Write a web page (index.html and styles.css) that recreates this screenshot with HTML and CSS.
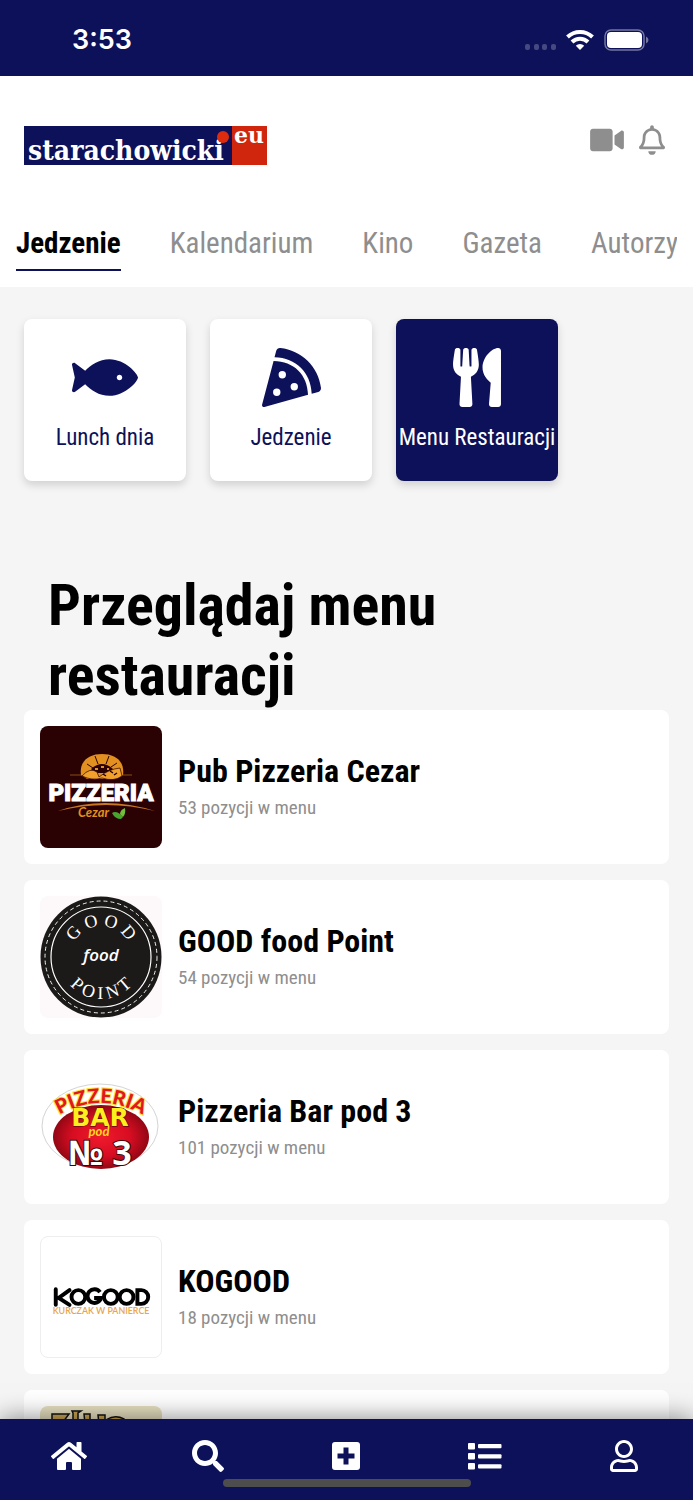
FILE: index.html
```html
<!DOCTYPE html>
<html lang="pl">
<head>
    <meta charset="UTF-8">
    <meta name="viewport" content="width=device-width, initial-scale=1.0">
    <title>starachowicki.eu - Menu Restauracji</title>
    <link rel="stylesheet" href="styles.css">
</head>
<body>
    <div class="status-bar">
        <span class="time">3:53</span>
        <div class="status-icons">
            <svg width="32" height="22" viewBox="0 0 32 22" fill="#464981">
                <rect x="1" y="15" width="5" height="6" rx="2"/>
                <rect x="10" y="15" width="5" height="6" rx="2"/>
                <rect x="18" y="15" width="5" height="6" rx="2"/>
                <rect x="27" y="15" width="5" height="6" rx="2"/>
            </svg>
            <svg width="28" height="22" viewBox="0 0 28 22" fill="none" stroke="#fff" stroke-width="4">
                <path d="M1.5 8A18 18 0 0 1 26.500 8"/>
                <path d="M6 13A11.500 11.500 0 0 1 22 13"/>
                <path d="M14 21l-4.200-4.200a6 6 0 0 1 8.400 0z" fill="#fff" stroke="none"/>
            </svg>
            <svg width="45" height="22" viewBox="0 0 45 22">
                <rect x="1" y="1" width="39" height="20" rx="6" fill="none" stroke="#74769f" stroke-width="1.500"/>
                <rect x="3" y="3" width="35" height="16" rx="4" fill="#fff"/>
                <path d="M42 7.500q2.500 1 2.500 3.500t-2.500 3.500z" fill="#74769f"/>
            </svg>
        </div>
    </div>

    <header class="header">
        <div class="brand">
            <a href="#" aria-label="starachowicki.eu">
                <svg class="logo" width="243" height="39" viewBox="0 0 243 39">
                    <rect width="208" height="39" fill="#0d1159"/>
                    <rect x="208" width="35" height="39" fill="#cf260d"/>
                    <text class="logo-name" x="4" y="34">starachowicki</text>
                    <text class="logo-eu" x="210" y="17">eu</text>
                    <circle cx="199" cy="11" r="6" fill="#dd2b0e"/>
                </svg>
            </a>
            <div class="actions">
                <button type="button" aria-label="Wideo">
                    <svg width="34" height="30" viewBox="0 0 576 512"><path d="M336.200 64H47.800C21.400 64 0 85.400 0 111.800v288.400C0 426.600 21.400 448 47.800 448h288.400c26.400 0 47.800-21.400 47.800-47.800V111.800c0-26.400-21.400-47.800-47.800-47.800zm189.400 37.700L416 177.300v157.400l109.600 75.500c21.200 14.600 50.400-.3 50.400-25.800V127.500c0-25.400-29.100-40.400-50.400-25.800z"/></svg>
                </button>
                <button type="button" aria-label="Powiadomienia">
                    <svg width="26" height="30" viewBox="0 0 448 512"><path d="M439.390 362.290c-19.320-20.760-55.470-51.990-55.470-154.290 0-77.700-54.480-139.900-127.940-155.160V32c0-17.670-14.320-32-31.980-32s-31.980 14.330-31.980 32v20.840C118.560 68.100 64.080 130.300 64.080 208c0 102.300-36.150 133.530-55.470 154.290-6 6.450-8.660 14.160-8.610 21.710.11 16.400 12.980 32 32.100 32h383.800c19.120 0 32-15.600 32.100-32 .05-7.550-2.610-15.270-8.610-21.710zM67.530 368c21.220-27.970 44.420-74.330 44.530-159.420 0-.2-.06-.38-.06-.58 0-61.860 50.140-112 112-112s112 50.140 112 112c0 .2-.06.38-.06.58.11 85.100 23.310 131.460 44.530 159.420H67.530zM224 512c35.320 0 63.970-28.650 63.970-64H160.030c0 35.350 28.650 64 63.970 64z"/></svg>
                </button>
            </div>
        </div>
        <nav class="tabs">
            <a href="#" class="active">Jedzenie</a>
            <a href="#">Kalendarium</a>
            <a href="#">Kino</a>
            <a href="#">Gazeta</a>
            <a href="#">Autorzy</a>
        </nav>
    </header>

    <main class="content">
        <div class="tiles">
            <a href="#" class="tile">
                <svg width="66" height="59" viewBox="0 0 576 512"><path d="M327.100 96c-89.970 0-168.540 54.770-212.270 101.630L27.500 131.580c-12.130-9.180-30.240.6-27.140 14.660L24.540 256 .35 365.770c-3.100 14.060 15.010 23.830 27.140 14.660l87.330-66.050C158.550 361.230 237.130 416 327.100 416 464.560 416 576 288 576 256S464.560 96 327.100 96zm87.430 184c-13.250 0-24-10.750-24-24 0-13.260 10.750-24 24-24 13.260 0 24 10.740 24 24 0 13.250-10.750 24-24 24z"/></svg>
                <span>Lunch dnia</span>
            </a>
            <a href="#" class="tile">
                <svg width="59" height="59" viewBox="0 0 512 512"><path d="M158.870.15c-16.160-1.520-31.200 8.420-35.330 24.120l-14.810 56.270c187.620 5.490 314.540 130.610 322.480 317l56.940-15.780c15.720-4.360 25.490-19.680 23.620-35.900C490.890 165.080 340.780 17.320 158.870.15zm-58.470 112L.55 491.640a16.210 16.210 0 0 0 20 19.750l379-105.100c-4.270-174.890-123.080-292.140-299.150-294.100zM128 416a32 32 0 1 1 32-32 32 32 0 0 1-32 32zm48-152a32 32 0 1 1 32-32 32 32 0 0 1-32 32zm104 104a32 32 0 1 1 32-32 32 32 0 0 1-32 32z"/></svg>
                <span>Jedzenie</span>
            </a>
            <a href="#" class="tile selected">
                <svg width="48" height="59" viewBox="0 0 416 512"><path d="M207.900 15.200c.8 4.700 16.100 94.500 16.100 128.800 0 52.300-27.800 89.600-68.900 104.600L168 486.700c.7 13.700-10.200 25.300-24 25.300H80c-13.700 0-24.700-11.500-24-25.300l12.900-238.100C27.700 233.600 0 196.200 0 144 0 109.600 15.300 19.900 16.100 15.200 19.300-5.100 61.400-5.400 64 16.300v141.200c1.300 3.400 15.100 3.200 16 0 1.400-25.300 7.900-139.200 8-141.800 3.300-20.800 44.700-20.800 47.900 0 .2 2.700 6.600 116.500 8 141.800.9 3.200 14.800 3.400 16 0V16.300c2.600-21.600 44.800-21.400 47.900-1.100zm119.200 285.700l-15 185.100c-1.200 14 9.900 26 23.900 26h56c13.300 0 24-10.700 24-24V24c0-13.200-10.700-24-24-24-82.500 0-221.400 178.500-64.900 300.900z"/></svg>
                <span>Menu Restauracji</span>
            </a>
        </div>

        <h1>Przeglądaj menu restauracji</h1>

        <div class="restaurants">
            <a href="#" class="restaurant">
                <svg class="thumb" viewBox="0 0 122 122">
                    <rect width="122" height="122" fill="#2a0203"/>
                    <path d="M30 49h62" stroke="#8a4c15"/>
                    <path d="M41 49C39 35 49 28 62 28s23 7 21 21l-8 4H47z" fill="#e29020"/>
                    <path d="M47 38l6 4M55 30l3 8M69 30l-3 8M77 37l-6 4" stroke="#2a0203"/>
                    <path d="M51 43q11-10 22 0l-3 4H55z" fill="#2a0203"/>
                    <path d="M55 43h3M61 41h3M67 43h2" stroke="#e29020" stroke-width="2"/>
                    <path d="M42 50q8-9 15-4l2 5q10-8 21-9l2 8q-8 6-20 2-10 3-20-2z" fill="#f0a02b" stroke="#2a0203" stroke-width=".7"/>
                    <path d="M63 48l3 2M70 45l3 2M74 49l3-2" stroke="#2a0203" stroke-width="1.500"/>
                    <text class="cezar-name" x="61" y="75">PIZZERIA</text>
                    <path d="M18 85q46-16 97 0-49-12-97 0z" fill="#c97822"/>
                    <text class="cezar-sub" x="38" y="91">Cezar</text>
                    <path d="M72 87q5-3 11 4l-2 2q-6 0-9-6z" fill="#45a52c"/>
                    <path d="M80 88q0-4 5-6 1 6-2 9z" fill="#75bd3c"/>
                </svg>
                <div class="info">
                    <h2>Pub Pizzeria Cezar</h2>
                    <p>53 pozycji w menu</p>
                </div>
            </a>
            <a href="#" class="restaurant">
                <svg class="thumb" viewBox="0 0 122 122">
                    <rect width="122" height="122" fill="#fdf9fa"/>
                    <circle cx="61" cy="61" r="60.500" fill="#1b1a19"/>
                    <circle cx="61" cy="61" r="56" fill="none" stroke="#f2f0ef" stroke-width="1" stroke-dasharray="4 3"/>
                    <circle cx="61" cy="61" r="50" fill="none" stroke="#fff" stroke-width="1.200"/>
                    <path id="arcTop" d="M30 61a31 31 0 0 1 62 0" fill="none"/>
                    <path id="arcBottom" d="M19 61a42 42 0 0 0 84 0" fill="none"/>
                    <text class="good-ring"><textPath href="#arcTop" startOffset="50%">G O O D</textPath></text>
                    <text class="good-food" x="61" y="65">food</text>
                    <text class="good-ring"><textPath href="#arcBottom" startOffset="50%">P O I N T</textPath></text>
                </svg>
                <div class="info">
                    <h2>GOOD food Point</h2>
                    <p>54 pozycji w menu</p>
                </div>
            </a>
            <a href="#" class="restaurant">
                <svg class="thumb" viewBox="0 0 122 122">
                    <defs>
                        <radialGradient id="barRed">
                            <stop offset="0" stop-color="#ef1a2c"/>
                            <stop offset=".6" stop-color="#d80d22"/>
                            <stop offset="1" stop-color="#920714"/>
                        </radialGradient>
                    </defs>
                    <ellipse cx="60" cy="60" rx="58" ry="42" fill="#fff" stroke="#d4d4d4"/>
                    <ellipse cx="61" cy="71" rx="48" ry="32" fill="url(#barRed)"/>
                    <path id="arcBar" d="M14 52Q60 22 108 52" fill="none"/>
                    <text class="bar-pizzeria"><textPath href="#arcBar" startOffset="50%">PIZZERIA</textPath></text>
                    <text class="bar-name" x="60" y="60">BAR</text>
                    <text class="bar-number" x="60" y="99">№ 3</text>
                    <text class="bar-pod" x="59" y="70">pod</text>
                </svg>
                <div class="info">
                    <h2>Pizzeria Bar pod 3</h2>
                    <p>101 pozycji w menu</p>
                </div>
            </a>
            <a href="#" class="restaurant">
                <svg class="thumb framed" viewBox="0 0 122 122">
                    <g fill="none" stroke="#000" stroke-width="4">
                        <path d="M15 53v16M29 54L18 62l11 7" stroke-linecap="round"/>
                        <circle cx="38" cy="61" r="7"/>
                        <path d="M60 56a7 7 0 1 0 1 6h-7"/>
                        <circle cx="71" cy="61" r="7"/>
                        <circle cx="87" cy="61" r="7"/>
                        <path d="M98 54h4a7 7 0 0 1 0 14h-4z"/>
                    </g>
                    <text class="kogood-sub" x="61" y="78">KURCZAK W PANIERCE</text>
                </svg>
                <div class="info">
                    <h2>KOGOOD</h2>
                    <p>18 pozycji w menu</p>
                </div>
            </a>
            <a href="#" class="restaurant">
                <svg class="thumb" viewBox="0 0 122 122">
                    <rect width="122" height="122" fill="#e6dfc0"/>
                    <path d="M12 8h17l-6 8H12zM32 5h9l-3 2v10h-5V7zM44 8h6v10h-5zM58 9h7v9h-6zM66 14q9-6 18-1v5H66z" fill="#c9a350" stroke="#111" stroke-width="1.500"/>
                </svg>
            </a>
        </div>
    </main>

    <nav class="bottom-nav">
        <a href="#" aria-label="Start"><svg width="36" height="32" viewBox="0 0 576 512"><path d="M280.370 148.260L96 300.110V464a16 16 0 0 0 16 16l112.060-.29a16 16 0 0 0 15.920-16V368a16 16 0 0 1 16-16h64a16 16 0 0 1 16 16v95.640a16 16 0 0 0 16 16.050L464 480a16 16 0 0 0 16-16V300L295.670 148.260a12.190 12.190 0 0 0-15.300 0zM571.600 251.470L488 182.560V44.050a12 12 0 0 0-12-12h-56a12 12 0 0 0-12 12v72.610L318.470 43a48 48 0 0 0-61 0L4.340 251.470a12 12 0 0 0-1.600 16.900l25.500 31A12 12 0 0 0 45.150 301l235.220-193.740a12.190 12.190 0 0 1 15.300 0L530.900 301a12 12 0 0 0 16.900-1.600l25.500-31a12 12 0 0 0-1.700-16.930z"/></svg></a>
        <a href="#" aria-label="Szukaj"><svg width="32" height="32" viewBox="0 0 512 512"><path d="M505 442.700L405.300 343c-4.500-4.500-10.600-7-17-7H372c27.600-35.300 44-79.700 44-128C416 93.100 322.900 0 208 0S0 93.100 0 208s93.100 208 208 208c48.300 0 92.700-16.400 128-44v16.300c0 6.400 2.500 12.500 7 17l99.700 99.700c9.400 9.400 24.600 9.400 33.900 0l28.300-28.300c9.400-9.400 9.400-24.600.1-34zM208 336c-70.700 0-128-57.200-128-128 0-70.700 57.200-128 128-128 70.700 0 128 57.200 128 128 0 70.700-57.200 128-128 128z"/></svg></a>
        <a href="#" aria-label="Dodaj"><svg width="28" height="32" viewBox="0 0 28 32"><path fill-rule="evenodd" d="M3 2h22a3 3 0 0 1 3 3v22a3 3 0 0 1-3 3H3a3 3 0 0 1-3-3V5a3 3 0 0 1 3-3zM11.500 7.500v6H5.500v5h6v6h5v-6h6v-5h-6v-6z"/></svg></a>
        <a href="#" aria-label="Lista"><svg width="34" height="32" viewBox="0 0 34 32"><rect x="0" y="3" width="7" height="6.500" rx="1"/><rect x="0" y="13" width="7" height="6.500" rx="1"/><rect x="0" y="23" width="7" height="6.500" rx="1"/><rect x="10" y="4" width="23.500" height="4.200" rx="1"/><rect x="10" y="14.200" width="23.500" height="4.200" rx="1"/><rect x="10" y="24.300" width="23.500" height="4.200" rx="1"/></svg></a>
        <a href="#" aria-label="Profil"><svg width="28" height="32" viewBox="0 0 448 512"><path d="M313.600 304c-28.700 0-42.500 16-89.600 16-47.100 0-60.800-16-89.600-16C60.200 304 0 364.200 0 438.400V464c0 26.500 21.500 48 48 48h352c26.500 0 48-21.500 48-48v-25.600c0-74.200-60.200-134.400-134.400-134.400zM400 464H48v-25.600c0-47.600 38.800-86.400 86.400-86.400 14.600 0 38.300 16 89.600 16 51.700 0 74.900-16 89.600-16 47.600 0 86.400 38.800 86.400 86.400V464zM224 288c79.500 0 144-64.500 144-144S303.500 0 224 0 80 64.500 80 144s64.500 144 144 144zm0-240c52.900 0 96 43.100 96 96s-43.100 96-96 96-96-43.100-96-96 43.100-96 96-96z"/></svg></a>
        <div class="home-indicator"></div>
    </nav>
</body>
</html>
```
FILE: styles.css
```css
* {
    box-sizing: border-box;
}

body {
    font-family: "Roboto Condensed", "Liberation Sans Narrow", Roboto, sans-serif;
    background-color: #f5f5f5;
    color: #000;
    height: 100vh;
    margin: 0;
    display: flex;
    flex-direction: column;
    overflow: hidden;
}

a {
    color: inherit;
    text-decoration: none;
}

svg {
    display: block;
    flex-shrink: 0;
}

/* Status bar */
.status-bar {
    background-color: #0d1159;
    color: white;
    height: 76px;
    padding: 0 44px 0 72px;
    display: flex;
    flex-shrink: 0;
    justify-content: space-between;
    align-items: center;
}

.time {
    font-family: Inter, sans-serif;
    font-size: 27px;
    font-weight: 600;
    line-height: 32px;
    padding-top: 4px;
}

.status-icons {
    display: flex;
    gap: 10px;
    padding-top: 3px;
}

/* Header */
.header {
    background-color: white;
    flex-shrink: 0;
    padding-top: 48px;
}

.brand {
    display: flex;
    justify-content: space-between;
    align-items: center;
    padding: 0 28px 0 24px;
    height: 42px;
}

.logo {
    overflow: visible;
}

.logo-name {
    font: bold 28px "DejaVu Serif Condensed", "DejaVu Serif", serif;
    fill: white;
}

.logo-eu {
    font: bold 22px "DejaVu Serif", serif;
    fill: white;
}

.actions {
    display: flex;
    gap: 15px;
    padding-bottom: 10px;
}

.actions button {
    background: none;
    border: none;
    padding: 0;
    cursor: pointer;
    fill: #8e8e8e;
}

.tabs {
    display: flex;
    gap: 49px;
    margin: 60px 16px 0;
    padding-bottom: 16px;
    overflow: hidden;
}

.tabs a {
    color: #8e8e8e;
    font-size: 29px;
    line-height: 34px;
    padding-bottom: 9px;
    border-bottom: 2px solid transparent;
}

.tabs a.active {
    color: black;
    font-weight: bold;
    border-bottom-color: #0d1159;
}

/* Content */
.content {
    flex: 1;
    min-height: 0;
    overflow: hidden;
    padding: 32px 24px 0;
}

.tiles {
    display: flex;
    gap: 24px;
}

.tile {
    width: 162px;
    height: 162px;
    display: flex;
    flex-direction: column;
    align-items: center;
    gap: 17px;
    padding-top: 29px;
    background-color: white;
    border-radius: 8px;
    box-shadow: 0 4px 8px rgba(0, 0, 0, 0.15);
    color: #0d1159;
    fill: #0d1159;
    font-size: 23px;
    line-height: 28px;
    white-space: nowrap;
}

.tile.selected {
    background-color: #0d1159;
    color: white;
    fill: white;
}

h1 {
    font-size: 58px;
    line-height: 70px;
    margin: 89px 24px 0;
}

.restaurants {
    display: flex;
    flex-direction: column;
    gap: 16px;
}

.restaurant {
    display: flex;
    align-items: center;
    gap: 16px;
    padding: 16px;
    background-color: white;
    border-radius: 8px;
}

.thumb {
    width: 122px;
    height: 122px;
    border-radius: 8px;
}

.thumb.framed {
    border: 1px solid #eee;
}

.info {
    padding-bottom: 2px;
}

.info h2 {
    font-size: 32px;
    line-height: 38px;
    margin: 0;
}

.info p {
    color: #8e8e8e;
    font-size: 19px;
    line-height: 24px;
    margin: 6px 0 0;
}

/* Restaurant logos */
.cezar-name {
    font: 900 24px Roboto, sans-serif;
    fill: white;
    stroke: white;
    stroke-width: 1px;
    text-anchor: middle;
}

.cezar-sub {
    font: italic bold 13px Lato, sans-serif;
    fill: #e29020;
}

.good-ring {
    font: 18px "Liberation Serif", serif;
    fill: white;
    text-anchor: middle;
}

.good-food {
    font: italic 600 17px "Open Sans", sans-serif;
    fill: white;
    text-anchor: middle;
}

.bar-pizzeria {
    font: 900 20px Lato, sans-serif;
    fill: #e01822;
    stroke: #ffe23a;
    stroke-width: 2px;
    paint-order: stroke;
    text-anchor: middle;
}

.bar-name {
    font: bold 25px "DejaVu Sans", sans-serif;
    fill: #ffee1d;
    stroke: #3d0507;
    stroke-width: 1px;
    paint-order: stroke;
    text-anchor: middle;
}

.bar-pod {
    font: italic bold 13px Lato, sans-serif;
    fill: #ffd91d;
    text-anchor: middle;
}

.bar-number {
    font: bold 34px "Noto Sans", sans-serif;
    fill: white;
    stroke: #3d0507;
    stroke-width: 2px;
    paint-order: stroke;
    text-anchor: middle;
}

.kogood-sub {
    font: 600 9px Lato, sans-serif;
    fill: #e9a54c;
    text-anchor: middle;
}

/* Bottom navigation */
.bottom-nav {
    position: relative;
    display: flex;
    flex-shrink: 0;
    height: 81px;
    padding-top: 21px;
    background-color: #0d1159;
    box-shadow: 0 0 24px rgba(0, 0, 0, 0.5);
}

.bottom-nav a {
    flex: 1;
    display: flex;
    justify-content: center;
    align-items: flex-start;
    fill: white;
}

.home-indicator {
    position: absolute;
    bottom: 13px;
    left: 50%;
    width: 248px;
    height: 8px;
    margin-left: -124px;
    border-radius: 4px;
    background-color: #4d4d4d;
}
```
